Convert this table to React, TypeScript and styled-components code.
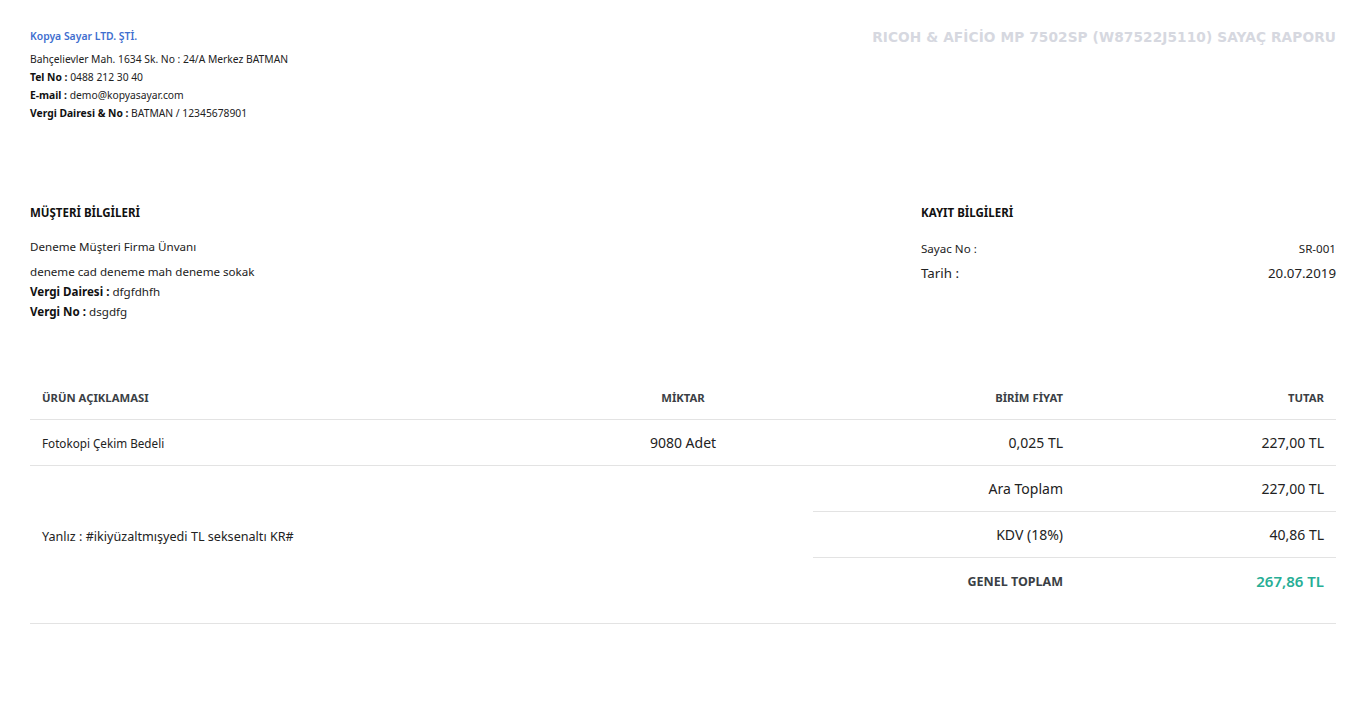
import React from "react";
import styled, { createGlobalStyle } from "styled-components";

const FONT = `"Noto Sans", "Open Sans", sans-serif`;

const Global = createGlobalStyle`
  html, body { margin: 0; padding: 0; background: #fff; }
  body { font-family: ${FONT}; color: #212529; }
  * { box-sizing: border-box; }
`;

const Page = styled.div`
  width: 1349px;
  padding: 27px 13px 60px 30px;
`;

const TopRow = styled.header`
  display: flex;
  justify-content: space-between;
  align-items: flex-start;
`;

const Company = styled.div`
  display: flex;
  flex-direction: column;
  font-size: 10.3px;
  line-height: 18px;
  color: #222;
`;

const CompanyName = styled.div`
  color: #3f6fcf;
  font-size: 10.4px;
  font-weight: 600;
  margin-bottom: 5px;
`;

const B = styled.b`
  font-weight: 700;
  color: #111;
`;

const Title = styled.h1`
  margin: 2px 0 0;
  font-family: "DejaVu Sans", sans-serif;
  font-weight: 700;
  font-size: 13.7px;
  letter-spacing: 0.1px;
  color: #d6d8e0;
`;

const InfoRow = styled.section`
  display: grid;
  grid-template-columns: 1fr 415px;
  margin-top: 82px;
`;

const SectionTitle = styled.h3`
  margin: 0 0 15px;
  font-size: 11.5px;
  font-weight: 700;
  line-height: 18px;
  color: #111;
`;

const Line = styled.div<{ $gap?: number }>`
  font-size: 11.6px;
  line-height: 20px;
  color: #222;
  margin-bottom: ${(p) => p.$gap ?? 0}px;
`;

const KVList = styled.div`
  margin-top: 2px;
`;

const KV = styled.div<{ $size?: number }>`
  display: flex;
  justify-content: space-between;
  font-size: ${(p) => p.$size ?? 12}px;
  line-height: 24px;
  color: #222;
`;

const Table = styled.div`
  margin-top: 54px;
  display: grid;
  grid-template-columns: 523px 260px 262px 261px;
`;

const HeadCell = styled.div<{ $align: string }>`
  height: 44px;
  display: flex;
  align-items: center;
  justify-content: ${(p) => p.$align};
  padding: 0 12px;
  font-size: 11.3px;
  font-weight: 700;
  color: #3b3f45;
  border-bottom: 1px solid #e3e3e3;
`;

const Cell = styled.div<{ $align: string; $size?: number }>`
  height: 46px;
  display: flex;
  align-items: center;
  justify-content: ${(p) => p.$align};
  padding: 0 12px;
  font-size: ${(p) => p.$size ?? 14}px;
  color: #222;
  border-bottom: 1px solid #e3e3e3;
`;

const Totals = styled.div`
  grid-column: 1 / -1;
  display: grid;
  grid-template-columns: 783px 1fr;
  border-bottom: 1px solid #e3e3e3;
  height: 158px;
`;

const InWords = styled.div`
  padding: 62px 12px 0;
  font-size: 12.6px;
  line-height: 18px;
  color: #222;
`;

const SumList = styled.div`
  display: flex;
  flex-direction: column;
`;

const SumRow = styled.div<{ $last?: boolean }>`
  display: grid;
  grid-template-columns: 262px 261px;
  height: 46px;
  border-bottom: ${(p) => (p.$last ? "none" : "1px solid #e3e3e3")};
`;

const SumCell = styled.div<{ $bold?: boolean; $green?: boolean }>`
  display: flex;
  align-items: center;
  justify-content: flex-end;
  padding: 0 12px;
  font-size: ${(p) => (p.$green ? 15 : p.$bold ? 12.5 : 14)}px;
  font-weight: ${(p) => (p.$green ? 600 : p.$bold ? 700 : 400)};
  color: ${(p) => (p.$green ? "#26ae95" : p.$bold ? "#3b3f45" : "#222")};
`;

export default function App() {
  return (
    <>
      <Global />
      <Page>
        <TopRow>
          <Company>
            <CompanyName>Kopya Sayar LTD. ŞTİ.</CompanyName>
            <span>Bahçelievler Mah. 1634 Sk. No : 24/A Merkez BATMAN</span>
            <span>
              <B>Tel No :</B> 0488 212 30 40
            </span>
            <span>
              <B>E-mail :</B> demo@kopyasayar.com
            </span>
            <span>
              <B>Vergi Dairesi &amp; No :</B> BATMAN / 12345678901
            </span>
          </Company>
          <Title>RICOH &amp; AFİCİO MP 7502SP (W87522J5110) SAYAÇ RAPORU</Title>
        </TopRow>

        <InfoRow>
          <div>
            <SectionTitle>MÜŞTERİ BİLGİLERİ</SectionTitle>
            <Line $gap={5}>Deneme Müşteri Firma Ünvanı</Line>
            <Line>deneme cad deneme mah deneme sokak</Line>
            <Line>
              <B>Vergi Dairesi :</B> dfgfdhfh
            </Line>
            <Line>
              <B>Vergi No :</B> dsgdfg
            </Line>
          </div>
          <div>
            <SectionTitle>KAYIT BİLGİLERİ</SectionTitle>
            <KVList>
              <KV $size={11.6}>
                <span>Sayac No :</span>
                <span>SR-001</span>
              </KV>
              <KV $size={13.3}>
                <span>Tarih :</span>
                <span>20.07.2019</span>
              </KV>
            </KVList>
          </div>
        </InfoRow>

        <Table>
          <HeadCell $align="flex-start">ÜRÜN AÇIKLAMASI</HeadCell>
          <HeadCell $align="center">MİKTAR</HeadCell>
          <HeadCell $align="flex-end">BİRİM FİYAT</HeadCell>
          <HeadCell $align="flex-end">TUTAR</HeadCell>

          <Cell $align="flex-start" $size={11.7}>Fotokopi Çekim Bedeli</Cell>
          <Cell $align="center">9080 Adet</Cell>
          <Cell $align="flex-end">0,025 TL</Cell>
          <Cell $align="flex-end">227,00 TL</Cell>

          <Totals>
            <InWords>Yanlız : #ikiyüzaltmışyedi TL seksenaltı KR#</InWords>
            <SumList>
              <SumRow>
                <SumCell>Ara Toplam</SumCell>
                <SumCell>227,00 TL</SumCell>
              </SumRow>
              <SumRow>
                <SumCell>KDV (18%)</SumCell>
                <SumCell>40,86 TL</SumCell>
              </SumRow>
              <SumRow $last>
                <SumCell $bold>GENEL TOPLAM</SumCell>
                <SumCell $green>267,86 TL</SumCell>
              </SumRow>
            </SumList>
          </Totals>
        </Table>
      </Page>
    </>
  );
}
